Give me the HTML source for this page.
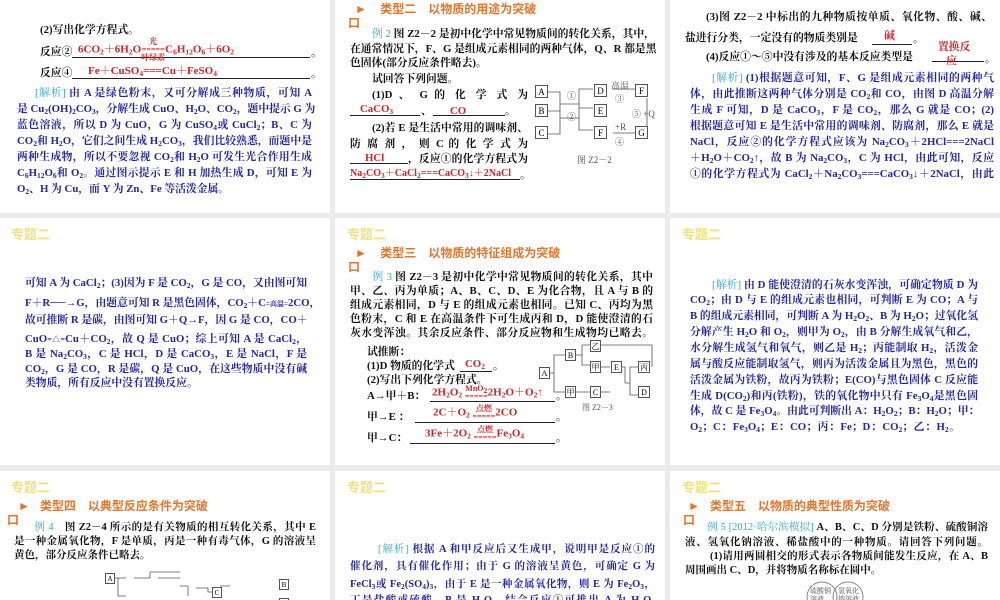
<!DOCTYPE html>
<html><head><meta charset="utf-8"><style>
*{margin:0;padding:0;box-sizing:border-box}
body{width:1000px;height:600px;background:#ebebeb;overflow:hidden;position:relative;font-family:"Liberation Serif","Noto Serif CJK SC",serif;font-weight:bold;font-size:10.8px}
.p{position:absolute;background:#fff;overflow:hidden}
.l{position:absolute;white-space:nowrap;line-height:14px}
.j{text-align:justify;text-align-last:justify;white-space:nowrap;height:15px;overflow:visible}
.b{color:#2226a8}.k{color:#111}.r{color:#d42424;font-weight:bold}
.c{color:#33aadd;font-weight:normal}
.o{color:#e8742a;font-family:"Liberation Sans","Noto Sans CJK SC",sans-serif;font-size:12px}
.y{color:#f2e27a;font-family:"Liberation Sans","Noto Sans CJK SC",sans-serif;font-size:13px}
sub{font-size:7.5px;vertical-align:-2px;line-height:0}
.u{position:absolute;border-bottom:1px solid #222;height:1px}
.bx{position:absolute;border:1px solid #555;font-size:9px;font-weight:normal;text-align:center;line-height:12px;background:#fff}
.cap{position:absolute;font-size:9px;color:#555;font-weight:normal}
.s{font-size:10.5px}
</style></head><body>

<!-- Panel 1 -->
<div class="p" style="left:0;top:0;width:330px;height:213px">
<div class="l k" style="left:40px;top:23px">(2)写出化学方程式。</div>
<div class="l k" style="left:40px;top:45px">反应②</div>
<div class="u" style="left:72px;top:57px;width:238px"></div><div class="l k" style="left:311px;top:46px">。</div>
<div class="l r" style="left:78px;top:38px;font-size:11px">6CO<sub>2</sub>＋6H<sub>2</sub>O<span style="font-size:8px;display:inline-block;line-height:8px;text-align:center;vertical-align:middle">光<br>=====<br>叶绿素</span>C<sub>6</sub>H<sub>12</sub>O<sub>6</sub>＋6O<sub>2</sub></div>
<div class="l k" style="left:40px;top:66px">反应④</div>
<div class="u" style="left:72px;top:78px;width:238px"></div><div class="l k" style="left:311px;top:67px">。</div>
<div class="l r" style="left:88px;top:64px;font-size:11px">Fe＋CuSO<sub>4</sub>===Cu＋FeSO<sub>4</sub></div>
<div class="l j b" style="left:17px;top:86px;width:295px"><span style="display:inline-block;width:18px"></span><span class="c">[解析]</span> 由 A 是绿色粉末，又可分解成三种物质，可知 A</div>
<div class="l j b" style="left:17px;top:102px;width:295px">是 Cu<sub>2</sub>(OH)<sub>2</sub>CO<sub>3</sub>，分解生成 CuO、H<sub>2</sub>O、CO<sub>2</sub>，题中提示 G 为</div>
<div class="l j b" style="left:17px;top:118px;width:295px">蓝色溶液，所以 D 为 CuO，G 为 CuSO<sub>4</sub>或 CuCl<sub>2</sub>；B、C 为</div>
<div class="l j b" style="left:17px;top:134px;width:295px">CO<sub>2</sub>和 H<sub>2</sub>O，它们之间生成 H<sub>2</sub>CO<sub>3</sub>，我们比较熟悉，而题中是</div>
<div class="l j b" style="left:17px;top:150px;width:295px">两种生成物，所以不要忽视 CO<sub>2</sub>和 H<sub>2</sub>O 可发生光合作用生成</div>
<div class="l j b" style="left:17px;top:166px;width:295px">C<sub>6</sub>H<sub>12</sub>O<sub>6</sub>和 O<sub>2</sub>。通过图示提示 E 和 H 加热生成 D，可知 E 为</div>
<div class="l b" style="left:17px;top:182px">O<sub>2</sub>、H 为 Cu，而 Y 为 Zn、Fe 等活泼金属。</div>
</div>

<!-- Panel 2 -->
<div class="p" style="left:335px;top:0;width:330px;height:213px">
<div class="l o" style="left:20px;top:2px">►&nbsp;&nbsp;&nbsp;&nbsp;类型二　以物质的用途为突破</div>
<div class="l o" style="left:13px;top:16px">口</div>
<div class="l j k" style="left:15px;top:27px;width:305px"><span style="display:inline-block;width:22px"></span><span class="c">例 2</span> 图 Z2－2 是初中化学中常见物质间的转化关系，其中，</div>
<div class="l j k" style="left:15px;top:42px;width:305px">在通常情况下，F、G 是组成元素相同的两种气体，Q、R 都是黑</div>
<div class="l k" style="left:15px;top:56px">色固体(部分反应条件略去)。</div>
<div class="l k" style="left:37px;top:72px">试回答下列问题。</div>
<div class="l j k" style="left:37px;top:88px;width:156px">(1)D 、 G 的 化 学 式 为</div>
<div class="u" style="left:15px;top:115px;width:70px"></div><div class="u" style="left:98px;top:115px;width:72px"></div>
<div class="l r" style="left:25px;top:102px">CaCO<sub>3</sub></div><div class="l k" style="left:86px;top:104px">、</div><div class="l r" style="left:115px;top:104px">CO</div><div class="l k" style="left:170px;top:104px">。</div>
<div class="l j k" style="left:37px;top:121px;width:156px">(2)若 E 是生活中常用的调味剂、</div>
<div class="l j k" style="left:15px;top:137px;width:178px">防 腐 剂 ， 则 C 的 化 学 式 为</div>
<div class="u" style="left:15px;top:163px;width:58px"></div>
<div class="l r" style="left:30px;top:151px">HCl</div><div class="l j k" style="left:73px;top:152px;width:120px">，反应①的化学方程式为</div>
<div class="l r" style="left:15px;top:167px;font-size:10px">Na<sub>2</sub>CO<sub>3</sub>＋CaCl<sub>2</sub>===CaCO<sub>3</sub>↓＋2NaCl</div>
<div class="u" style="left:15px;top:179px;width:170px"></div><div class="l k" style="left:185px;top:168px">。</div>
<svg style="position:absolute;left:190px;top:78px" width="140" height="70" viewBox="0 0 140 70" fill="none" stroke="#555" stroke-width="0.8">
<path d="M23 14H35V26M23 33H35V26M35 26H54M54 11V40M54 11H68M54 30H68M23 56H35V40M23 33H35V40M35 40H54M54 40V52H68"/>
<path d="M88 11H110M110 55H88M122 50V20" /></svg>
<div class="bx" style="left:200px;top:85px;width:13px;height:13px">A</div>
<div class="bx" style="left:200px;top:104px;width:13px;height:13px">B</div>
<div class="bx" style="left:200px;top:126px;width:13px;height:13px">C</div>
<div class="bx" style="left:259px;top:84px;width:13px;height:13px">D</div>
<div class="bx" style="left:259px;top:104px;width:13px;height:13px">E</div>
<div class="bx" style="left:259px;top:126px;width:13px;height:13px">F</div>
<div class="bx" style="left:300px;top:84px;width:13px;height:13px">F</div>
<div class="bx" style="left:300px;top:126px;width:13px;height:13px">G</div>
<div class="cap" style="left:232px;top:89px">①</div><div class="cap" style="left:232px;top:110px">②</div>
<div class="cap" style="left:276px;top:79px">高温</div><div class="cap" style="left:280px;top:92px">③</div>
<div class="cap" style="left:280px;top:122px">+R</div><div class="cap" style="left:280px;top:135px">④</div>
<div class="cap" style="left:297px;top:107px">⑤ +Q</div>
<div class="cap" style="left:242px;top:153px">图 Z2－2</div>
</div>

<!-- Panel 3 -->
<div class="p" style="left:670px;top:0;width:330px;height:213px">
<div class="l j k" style="left:36px;top:10px;width:286px">(3)图 Z2－2 中标出的九种物质按单质、氧化物、酸、碱、</div>
<div class="l k" style="left:15px;top:31px">盐进行分类，一定没有的物质类别是</div>
<div class="u" style="left:202px;top:44px;width:40px"></div><div class="l r" style="left:214px;top:29px">碱</div><div class="l k" style="left:243px;top:32px">。</div>
<div class="l k" style="left:36px;top:50px">(4)反应①～⑤中没有涉及的基本反应类型是</div>
<div class="u" style="left:262px;top:61px;width:52px"></div><div class="l r" style="left:268px;top:40px;line-height:14px">置换反<br>&nbsp;&nbsp;&nbsp;应</div><div class="l k" style="left:315px;top:52px">。</div>
<div class="l j b" style="left:20px;top:71px;width:304px"><span style="display:inline-block;width:22px"></span><span class="c">[解析]</span> (1)根据题意可知，F、G 是组成元素相同的两种气</div>
<div class="l j b" style="left:20px;top:87px;width:304px">体，由此推断这两种气体分别是 CO<sub>2</sub>和 CO，由图 D 高温分解</div>
<div class="l j b" style="left:20px;top:103px;width:304px">生成 F 可知，D 是 CaCO<sub>3</sub>，F 是 CO<sub>2</sub>，那么 G 就是 CO；(2)</div>
<div class="l j b" style="left:20px;top:119px;width:304px">根据题意可知 E 是生活中常用的调味剂、防腐剂，那么 E 就是</div>
<div class="l j b" style="left:20px;top:135px;width:304px">NaCl，反应②的化学方程式应该为 Na<sub>2</sub>CO<sub>3</sub>＋2HCl===2NaCl</div>
<div class="l j b" style="left:20px;top:151px;width:304px">＋H<sub>2</sub>O＋CO<sub>2</sub>↑，故 B 为 Na<sub>2</sub>CO<sub>3</sub>，C 为 HCl，由此可知，反应</div>
<div class="l j b" style="left:20px;top:167px;width:304px">①的化学方程式为 CaCl<sub>2</sub>＋Na<sub>2</sub>CO<sub>3</sub>===CaCO<sub>3</sub>↓＋2NaCl，由此</div>
</div>

<!-- Panel 4 -->
<div class="p" style="left:0;top:218px;width:330px;height:247px">
<div class="l y" style="left:11px;top:10px">专题二</div>
<div class="l j b" style="left:25px;top:58px;width:282px">可知 A 为 CaCl<sub>2</sub>；(3)因为 F 是 CO<sub>2</sub>，G 是 CO，又由图可知</div>
<div class="l j b" style="left:25px;top:78px;width:282px">F＋R──→G，由题意可知 R 是黑色固体，CO<sub>2</sub>＋C<span style="font-size:7px">=高温=</span>2CO，</div>
<div class="l j b" style="left:25px;top:95px;width:282px">故可推断 R 是碳，由图可知 G＋Q→F，因 G 是 CO，CO＋</div>
<div class="l j b" style="left:25px;top:114px;width:282px">CuO<span style="font-size:8px">=△=</span>Cu＋CO<sub>2</sub>，故 Q 是 CuO；综上可知 A 是 CaCl<sub>2</sub>，</div>
<div class="l j b" style="left:25px;top:129px;width:282px">B 是 Na<sub>2</sub>CO<sub>3</sub>，C 是 HCl，D 是 CaCO<sub>3</sub>，E 是 NaCl，F 是</div>
<div class="l j b" style="left:25px;top:144px;width:282px">CO<sub>2</sub>，G 是 CO，R 是碳，Q 是 CuO，在这些物质中没有碱</div>
<div class="l b" style="left:25px;top:158px">类物质，所有反应中没有置换反应。</div>
</div>

<!-- Panel 5 -->
<div class="p" style="left:335px;top:218px;width:330px;height:247px">
<div class="l y" style="left:12px;top:10px">专题二</div>
<div class="l o" style="left:20px;top:28px">►&nbsp;&nbsp;&nbsp;&nbsp;类型三　以物质的特征组成为突破</div>
<div class="l o" style="left:13px;top:42px">口</div>
<div class="l j k" style="left:15px;top:52px;width:303px"><span style="display:inline-block;width:22px"></span><span class="c">例 3</span> 图 Z2－3 是初中化学中常见物质间的转化关系，其中</div>
<div class="l j k" style="left:15px;top:66px;width:303px">甲、乙、丙为单质；A、B、C、D、E 为化合物，且 A 与 B 的</div>
<div class="l j k" style="left:15px;top:80px;width:303px">组成元素相同，D 与 E 的组成元素也相同。已知 C、丙均为黑</div>
<div class="l j k" style="left:15px;top:94px;width:303px">色粉末，C 和 E 在高温条件下可生成丙和 D，D 能使澄清的石</div>
<div class="l j k" style="left:15px;top:108px;width:303px">灰水变浑浊。其余反应条件、部分反应物和生成物均已略去。</div>
<div class="l k" style="left:32px;top:127px">试推断：</div>
<div class="l k" style="left:32px;top:141px">(1)D 物质的化学式</div><div class="u" style="left:125px;top:153px;width:32px"></div><div class="l r" style="left:130px;top:139px">CO<sub>2</sub></div><div class="l k" style="left:158px;top:141px">。</div>
<div class="l k" style="left:32px;top:155px">(2)写出下列化学方程式。</div>
<div class="l k" style="left:32px;top:171px">A→甲＋B：</div><div class="u" style="left:95px;top:183px;width:125px"></div>
<div class="l r" style="left:97px;top:167px;font-size:11px">2H<sub>2</sub>O<sub>2</sub> <span style="font-size:8px;display:inline-block;line-height:8px;text-align:center;vertical-align:middle">MnO<sub>2</sub><br>=====</span>2H<sub>2</sub>O＋O<sub>2</sub>↑</div><div class="l k" style="left:221px;top:171px">。</div>
<div class="l k" style="left:32px;top:192px">甲→E ：</div><div class="u" style="left:80px;top:204px;width:140px"></div>
<div class="l r" style="left:98px;top:187px;font-size:11px">2C＋O<sub>2</sub> <span style="font-size:8px;display:inline-block;line-height:8px;text-align:center;vertical-align:middle">点燃<br>=====</span>2CO</div><div class="l k" style="left:221px;top:192px">。</div>
<div class="l k" style="left:32px;top:213px">甲→C：</div><div class="u" style="left:75px;top:225px;width:145px"></div>
<div class="l r" style="left:90px;top:208px;font-size:11px">3Fe＋2O<sub>2</sub> <span style="font-size:8px;display:inline-block;line-height:8px;text-align:center;vertical-align:middle">点燃<br>=====</span>Fe<sub>3</sub>O<sub>4</sub></div><div class="l k" style="left:221px;top:213px">。</div>
<svg style="position:absolute;left:205px;top:125px" width="125" height="75" viewBox="0 0 125 75" fill="none" stroke="#555" stroke-width="0.8">
<path d="M10 30H14M14 30V12H27M14 30V49H27M36 12H42M42 2H52M42 2V22H52M42 12V22M36 49H52M61 49H70M61 24H70M78 24H85V40M85 40H90M90 40V24H98M90 40V52H98M112 24V2H60"/></svg>
<div class="bx" style="left:204px;top:149px;width:11px;height:12px;font-size:8px">A</div>
<div class="bx" style="left:230px;top:131px;width:11px;height:12px;font-size:8px">B</div>
<div class="bx" style="left:230px;top:168px;width:11px;height:12px;font-size:8px">甲</div>
<div class="bx" style="left:255px;top:122px;width:11px;height:12px;font-size:8px">乙</div>
<div class="bx" style="left:255px;top:143px;width:11px;height:12px;font-size:8px">甲</div>
<div class="bx" style="left:255px;top:168px;width:11px;height:12px;font-size:8px">C</div>
<div class="bx" style="left:276px;top:143px;width:11px;height:12px;font-size:8px">E</div>
<div class="bx" style="left:303px;top:143px;width:12px;height:12px;font-size:8px">丙</div>
<div class="bx" style="left:303px;top:168px;width:12px;height:12px;font-size:8px">D</div>
<div class="cap" style="left:247px;top:184px;font-size:8px">图 Z2－3</div>
</div>

<!-- Panel 6 -->
<div class="p" style="left:670px;top:218px;width:330px;height:247px">
<div class="l y" style="left:12px;top:10px">专题二</div>
<div class="l j b" style="left:20px;top:60px;width:288px"><span style="display:inline-block;width:22px"></span><span class="c">[解析]</span> 由 D 能使澄清的石灰水变浑浊，可确定物质 D 为</div>
<div class="l j b" style="left:20px;top:75px;width:288px">CO<sub>2</sub>；由 D 与 E 的组成元素也相同，可判断 E 为 CO；A 与</div>
<div class="l j b" style="left:20px;top:91px;width:288px">B 的组成元素相同，可判断 A 为 H<sub>2</sub>O<sub>2</sub>、B 为 H<sub>2</sub>O；过氧化氢</div>
<div class="l j b" style="left:20px;top:107px;width:288px">分解产生 H<sub>2</sub>O 和 O<sub>2</sub>，则甲为 O<sub>2</sub>，由 B 分解生成氧气和乙，</div>
<div class="l j b" style="left:20px;top:123px;width:288px">水分解生成氢气和氧气，则乙是 H<sub>2</sub>；丙能制取 H<sub>2</sub>，活泼金</div>
<div class="l j b" style="left:20px;top:139px;width:288px">属与酸反应能制取氢气，则丙为活泼金属且为黑色，黑色的</div>
<div class="l j b" style="left:20px;top:155px;width:288px">活泼金属为铁粉，故丙为铁粉；E(CO)与黑色固体 C 反应能</div>
<div class="l j b" style="left:20px;top:171px;width:288px">生成 D(CO<sub>2</sub>)和丙(铁粉)，铁的氧化物中只有 Fe<sub>3</sub>O<sub>4</sub>是黑色固</div>
<div class="l j b" style="left:20px;top:186px;width:288px">体，故 C 是 Fe<sub>3</sub>O<sub>4</sub>。由此可判断出 A：H<sub>2</sub>O<sub>2</sub>；B：H<sub>2</sub>O；甲：</div>
<div class="l j b" style="left:20px;top:202px;width:270px">O<sub>2</sub>；C：Fe<sub>3</sub>O<sub>4</sub>；E：CO；丙：Fe；D：CO<sub>2</sub>；乙：H<sub>2</sub>。</div>
</div>

<!-- Panel 7 -->
<div class="p" style="left:0;top:471px;width:330px;height:129px">
<div class="l y" style="left:11px;top:10px">专题二</div>
<div class="l o" style="left:18px;top:28px">►&nbsp;&nbsp;&nbsp;类型四　以典型反应条件为突破</div>
<div class="l o" style="left:7px;top:42px">口</div>
<div class="l j k s" style="left:14px;top:50px;width:302px"><span style="display:inline-block;width:20px"></span><span class="c">例 4</span>　图 Z2－4 所示的是有关物质的相互转化关系，其中 E</div>
<div class="l j k s" style="left:14px;top:64px;width:302px">是一种金属氧化物，F 是单质，丙是一种有毒气体，G 的溶液呈</div>
<div class="l k s" style="left:14px;top:78px">黄色，部分反应条件已略去。</div>
<svg style="position:absolute;left:100px;top:97px" width="160" height="32" viewBox="0 0 160 32" fill="none" stroke="#555" stroke-width="0.8">
<path d="M12 10H26M18 10V28H26M34 10H50M50 4H80M50 10V4M58 10H80M80 18H88M88 18V28M96 20H108V24H112M120 18H130"/></svg>
<div class="bx" style="left:105px;top:102px;width:10px;height:11px;font-size:7px;line-height:10px">A</div>
<div class="bx" style="left:212px;top:116px;width:10px;height:11px;font-size:7px;line-height:10px">C</div>
<div class="bx" style="left:279px;top:108px;width:10px;height:11px;font-size:7px;line-height:10px">B</div>
<div class="bx" style="left:279px;top:127px;width:10px;height:11px;font-size:7px;line-height:10px">D</div>
</div>

<!-- Panel 8 -->
<div class="p" style="left:335px;top:471px;width:330px;height:129px">
<div class="l y" style="left:12px;top:10px">专题二</div>
<div class="l j b s" style="left:15px;top:72px;width:305px"><span style="display:inline-block;width:28px"></span><span class="c">[解析]</span> 根据 A 和甲反应后又生成甲，说明甲是反应①的</div>
<div class="l j b s" style="left:15px;top:89px;width:305px">催化剂，具有催化作用；由于 G 的溶液呈黄色，可确定 G 为</div>
<div class="l j b s" style="left:15px;top:107px;width:305px">FeCl<sub>3</sub>或 Fe<sub>2</sub>(SO<sub>4</sub>)<sub>3</sub>，由于 E 是一种金属氧化物，则 E 为 Fe<sub>2</sub>O<sub>3</sub>，</div>
<div class="l j b s" style="left:15px;top:123px;width:305px">丁是盐酸或硫酸，B 是 H<sub>2</sub>O，结合反应①可推出 A 为 H<sub>2</sub>O<sub>2</sub></div>
</div>

<!-- Panel 9 -->
<div class="p" style="left:670px;top:471px;width:330px;height:129px">
<div class="l y" style="left:12px;top:10px">专题二</div>
<div class="l o" style="left:18px;top:28px">►&nbsp;&nbsp;&nbsp;类型五　以物质的典型性质为突破</div>
<div class="l o" style="left:13px;top:42px">口</div>
<div class="l j k s" style="left:15px;top:50px;width:303px"><span style="display:inline-block;width:22px"></span><span class="c">例 5 [2012·哈尔滨模拟]</span> A、B、C、D 分别是铁粉、硫酸铜溶</div>
<div class="l j k s" style="left:15px;top:65px;width:303px">液、氢氧化钠溶液、稀盐酸中的一种物质。请回答下列问题。</div>
<div class="l j k s" style="left:40px;top:79px;width:278px">(1)请用两圆相交的形式表示各物质间能发生反应，在 A、B</div>
<div class="l k s" style="left:15px;top:93px">周围画出 C、D，并将物质名称标在圆中。</div>
<svg style="position:absolute;left:132px;top:110px" width="70" height="22" viewBox="0 0 70 22" fill="none" stroke="#666" stroke-width="0.8">
<circle cx="20" cy="16" r="15"/><circle cx="46" cy="16" r="15"/></svg>
<div class="cap" style="left:140px;top:116px;font-size:7px;line-height:8px">硫酸铜<br>溶液</div>
<div class="cap" style="left:168px;top:116px;font-size:7px;line-height:8px">氢氧化<br>钠溶液</div>
</div>
</body></html>
